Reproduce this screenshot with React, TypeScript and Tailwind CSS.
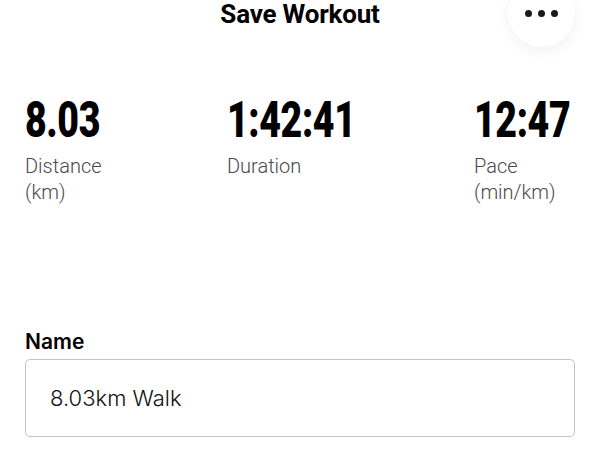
const stats = [
  { value: "8.03", label: ["Distance", "(km)"] },
  { value: "1:42:41", label: ["Duration"] },
  { value: "12:47", label: ["Pace", "(min/km)"] },
];

const App = () => {
  return (
    <div className="relative h-[450px] w-[600px] overflow-hidden bg-white">
      <header className="relative h-[47px]">
        <h1 className="text-center font-['Roboto',sans-serif] text-[26px] font-bold leading-[28px] tracking-[-0.2px] text-black">
          Save Workout
        </h1>
        <button className="absolute right-[25px] top-[-20px] flex h-[67px] w-[67px] items-end justify-center gap-[6px] rounded-full bg-white pb-[30px] shadow-[0_4px_14px_rgba(0,0,0,0.06)]">
          <span className="h-[7px] w-[7px] rounded-full bg-[#1a1a1a]" />
          <span className="h-[7px] w-[7px] rounded-full bg-[#1a1a1a]" />
          <span className="h-[7px] w-[7px] rounded-full bg-[#1a1a1a]" />
        </button>
      </header>

      <section className="mt-[48px] grid grid-cols-[202px_247px_1fr] px-[25px]">
        {stats.map((s) => (
          <div key={s.value} className="flex flex-col">
            <span className="inline-block origin-left scale-x-[0.75] whitespace-nowrap font-['Roboto',sans-serif] text-[50px] font-black leading-[50px] tracking-[-0.5px] text-black">
              {s.value}
            </span>
            <span className="mt-[8px] font-['Roboto',sans-serif] text-[20px] font-light leading-[26px] text-[#4a4a4a]">
              {s.label.map((l) => (
                <span key={l} className="block">
                  {l}
                </span>
              ))}
            </span>
          </div>
        ))}
      </section>

      <section className="mt-[125px] px-[25px]">
        <label className="block font-['Inter',sans-serif] text-[21px] font-semibold leading-[24px] text-black">
          Name
        </label>
        <div className="mt-[5px] flex h-[78px] items-center rounded-[5px] border border-[#c4c4c4] px-[24px]">
          <span className="font-['Inter',sans-serif] text-[22px] font-light text-[#111]">
            8.03km Walk
          </span>
        </div>
      </section>
    </div>
  );
};

export default App;
